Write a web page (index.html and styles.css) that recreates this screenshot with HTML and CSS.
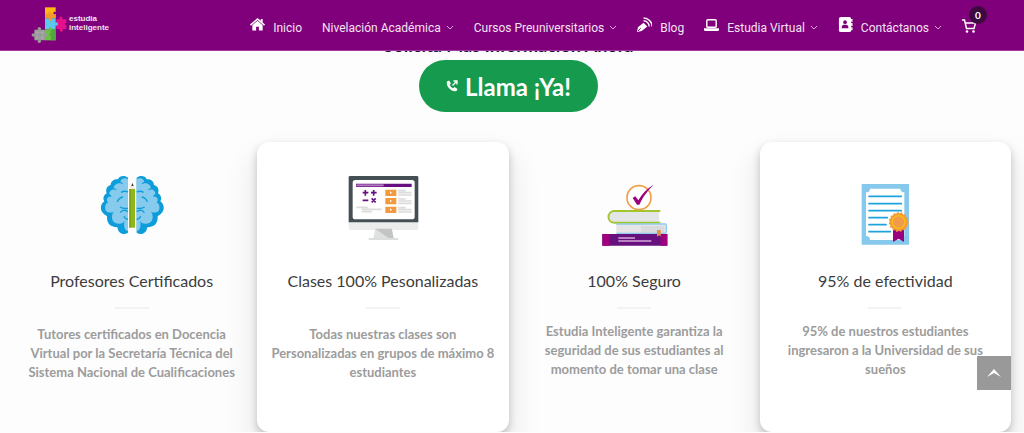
FILE: index.html
```
<!DOCTYPE html>
<html lang="es">
<head>
    <meta charset="UTF-8">
    <meta name="viewport" content="width=device-width, initial-scale=1.0">
    <title>Estudia Inteligente</title>
    <link rel="stylesheet" href="styles.css">
</head>
<body>
    <header class="header">
        <a href="#inicio" class="logo">
            <svg class="logo-mark" viewBox="0 0 108 108" aria-hidden="true">
                <path fill="#fdb813" d="M42 1h32v33H42z"/>
                <path fill="#f39a2b" d="M42 20h10v-4h8v5h14v13H42z"/>
                <circle cx="71" cy="18" r="4" fill="#80007b"/>
                <path fill="#5bc8f0" d="M42 34h32v33H42z"/>
                <circle cx="58" cy="37" r="5" fill="#f39a2b"/>
                <path fill="#e5118a" d="M76 37h10a5 5 0 1 1 8 0h12v10a4 4 0 1 0 0 8v11H95a5 5 0 1 1-8 0H76z"/>
                <circle cx="76" cy="51" r="5" fill="#5bc8f0"/>
                <path fill="#6fbe44" d="M42 67h32v33H42z"/>
                <path fill="#4fa83d" d="M58 67h16v33H60V86h-4v-8h4z"/>
                <circle cx="58" cy="66" r="5" fill="#6fbe44"/>
                <path fill="#9a9a9a" d="M10 68h11a5 5 0 1 1 8 0h13v32H29a5 5 0 1 1-8 0H10V88a5 5 0 1 1 0-8z"/>
                <circle cx="43" cy="84" r="5" fill="#9a9a9a"/>
                <path stroke="#c4c4c4" stroke-width="1" d="M12 76h28M12 92h28M18 69v30M34 69v30"/>
            </svg>
            <span class="logo-text">estudia<br>inteligente</span>
        </a>

        <nav class="nav-links">
            <a href="#inicio" class="nav-link">
                <svg class="nav-icon" viewBox="0 0 16 16" fill="#fff" aria-hidden="true">
                    <path d="M8 1 0 8l1 1.200 7-6 7 6L16 8l-2.500-2.200V2h-2v2z"/>
                    <path d="M8 4 2.500 8.700V14.500h4v-4h3v4h4V8.700z"/>
                </svg>
                Inicio
            </a>
            <a href="#nivelacion" class="nav-link">
                Nivelación Académica
                <svg class="caret" viewBox="0 0 8 8" aria-hidden="true"><path d="M1 2l3 3 3-3"/></svg>
            </a>
            <a href="#cursos" class="nav-link">
                Cursos Preuniversitarios
                <svg class="caret" viewBox="0 0 8 8" aria-hidden="true"><path d="M1 2l3 3 3-3"/></svg>
            </a>
            <a href="#blog" class="nav-link">
                <svg class="nav-icon" viewBox="0 0 16 16" aria-hidden="true">
                    <path fill="#fff" d="M0 16l1-5L7 6l4 4-6 5z"/>
                    <path stroke="#80007b" d="M1 15l3-3"/>
                    <path fill="none" stroke="#fff" stroke-width="1.5" d="M7 4a6 6 0 0 1 6 6M7 1a9 9 0 0 1 9 9"/>
                </svg>
                Blog
            </a>
            <a href="#virtual" class="nav-link">
                <svg class="nav-icon" viewBox="0 0 16 16" aria-hidden="true">
                    <rect x="3" y="3" width="10" height="8" rx="1" fill="none" stroke="#fff" stroke-width="1.5"/>
                    <path fill="#fff" d="M0 12h16v2l-1 1H1l-1-1z"/>
                </svg>
                Estudia Virtual
                <svg class="caret" viewBox="0 0 8 8" aria-hidden="true"><path d="M1 2l3 3 3-3"/></svg>
            </a>
            <a href="#contacto" class="nav-link">
                <svg class="nav-icon" viewBox="0 0 16 16" aria-hidden="true">
                    <rect x="1" y="0" width="13" height="16" rx="2" fill="#fff"/>
                    <path fill="#fff" d="M14 2h1.500v3H14zM14 6.500h1.500v3H14zM14 11h1.500v3H14z"/>
                    <circle cx="7.500" cy="5.500" r="2" fill="#80007b"/>
                    <path fill="#80007b" d="M4 12V10.500a2.500 2.500 0 0 1 2-2.300h3a2.500 2.500 0 0 1 2 2.300V12z"/>
                </svg>
                Contáctanos
                <svg class="caret" viewBox="0 0 8 8" aria-hidden="true"><path d="M1 2l3 3 3-3"/></svg>
            </a>
            <a href="#carrito" class="cart" aria-label="Carrito">
                <svg class="cart-icon" viewBox="0 0 14 14" aria-hidden="true">
                    <path fill="none" stroke="#fff" stroke-width="1.5" d="M0 1h2.500l2 8.500h7.500L13.500 4H3.500"/>
                    <circle cx="5" cy="12.500" r="1.300" fill="#fff"/>
                    <circle cx="11.500" cy="12.500" r="1.300" fill="#fff"/>
                </svg>
                <span class="cart-count">0</span>
            </a>
        </nav>
    </header>

    <main class="main" id="inicio">
        <h2 class="cta-title">Solicita Más Información Ahora</h2>
        <a href="#llamar" class="cta-button">
            <svg class="phone" viewBox="0 0 12 12" aria-hidden="true">
                <path fill="#fff" d="M1 1.500 3 .5l2 3-1.300 1.300C4.200 6.300 5.700 7.800 7.200 8.300L8.500 7l3 2-1 2C5.500 12.500-.5 6.500 1 1.500z"/>
                <path fill="none" stroke="#fff" stroke-width="1.300" d="M6.500 5.500l4-4M7.500 1h3.500v3.500"/>
            </svg>
            Llama ¡Ya!
        </a>

        <section class="cards">
            <article class="card card-low">
                <svg class="card-icon" viewBox="-12 0 330 270" aria-hidden="true">
                    <g id="half">
                        <path fill="#0d9ddb" d="M141 53c-10-8-26-6-30 5-12-2-22 6-22 17-12 3-16 14-12 25-10 6-12 17-7 24-13 9-14 28-2 37 5 4 9 6 10 8-1 20 8 32 31 33 3 20 19 25 32 16z"/>
                        <path fill="#86cbee" d="M141 58c-8-6-20-4-23 7 5 2 8 5 9 9-7-8-27-6-29 11 5 0 8 2 10 6-12-6-24 0-23 12 4 1 6 4 7 7-13-2-18 10-11 18-8 0-13 20-3 27 7 3 14 4 20 1-9 10-8 37 17 35 8 0 13-4 16-9-4 15 0 30 10 31z"/>
                        <path fill="none" stroke="#0d9ddb" stroke-width="4" d="M109 126c1-7 9-14 17-15M120 97c7-4 15-4 21-1M117 141c9 6 17 5 24 4M118 158c4-9 14-9 23-3M129 169c3 7 8 9 12 9"/>
                    </g>
                    <use href="#half" transform="translate(308 0) scale(-1 1)"/>
                    <path fill="#8fb71b" d="M145 87h17v116h-17z"/>
                    <path fill="#729f12" d="M145 87h4v116h-4z"/>
                    <path fill="#f4ead9" d="M145 87l9-19 8 19z"/>
                    <path fill="#333" d="M151 78l3-9 4 9z"/>
                </svg>
                <h3 class="card-title">Profesores Certificados</h3>
                <p class="card-text">Tutores certificados en Docencia Virtual por la Secretaría Técnica del Sistema Nacional de Cualificaciones</p>
            </article>

            <article class="card card-low card-raised">
                <svg class="card-icon" viewBox="-8 0 330 270" aria-hidden="true">
                    <rect x="54" y="48" width="209" height="142" rx="4" fill="#444f54"/>
                    <rect x="66" y="60" width="186" height="118" rx="8" fill="#fff"/>
                    <path fill="#ececec" d="M54 187h209v18a5 5 0 0 1-5 5H59a5 5 0 0 1-5-5z"/>
                    <path fill="#dfe0e0" d="M134 206h49l6 29h-61z"/>
                    <path fill="#c3c4c4" d="M134 206h49l6 29h-15z"/>
                    <path fill="#dcdddd" d="M114 234h89v6h-89z"/>
                    <path fill="#66117f" d="M76 71h167v10H76z"/>
                    <path fill="#b27abe" d="M77 73h82v6H77z"/>
                    <path stroke="#66117f" stroke-width="5" d="M96 98h17M104 90v17M121 98h17M129 90v17M96 121h17M123 115l12 12M135 115l-12 12"/>
                    <path fill="#f3993e" d="M164 89h33v19h-33zM164 114h33v19h-33zM164 140h33v19h-33z"/>
                    <path fill="#fff" d="M178 94l6 4-6 4zM178 119l6 4-6 4zM178 145l6 4-6 4z"/>
                    <path stroke="#dcdcdc" stroke-width="5" d="M203 92h22M203 98h40M203 105h40M203 117h22M203 123h40M203 130h40M203 143h22M203 149h40M203 156h40M77 142h34M93 148h60M93 155h31"/>
                </svg>
                <h3 class="card-title">Clases 100% Pesonalizadas</h3>
                <p class="card-text">Todas nuestras clases son Personalizadas en grupos de máximo 8 estudiantes</p>
            </article>

            <article class="card">
                <svg class="card-icon" viewBox="-6 -30 330 270" aria-hidden="true">
                    <circle cx="174" cy="83" r="36" fill="#fff" stroke="#f3a04b" stroke-width="5"/>
                    <path fill="#9b007d" d="M155 84l8-5 9 12c12-21 27-36 46-47-17 17-31 34-43 60h-7z"/>
                    <path fill="#e4e5e6" d="M97 125h137v32H97c-15-4-15-28 0-32z"/>
                    <path fill="none" stroke="#a4c62d" stroke-width="6" d="M238 123H99c-22 2-22 34 0 35h139"/>
                    <path fill="#e5e5e8" d="M106 163h148v29H106z"/>
                    <path fill="#d8dadd" d="M180 168h70v22h-70z"/>
                    <path fill="none" stroke="#8ccbea" stroke-width="4" d="M106 162h147q3 0 3 5v18q0 4-3 5H106"/>
                    <path fill="#67117e" d="M64 192h195v35H64z"/>
                    <path fill="#a0007d" d="M64 192h22v35H64zM239 192h20v35h-20z"/>
                    <path stroke="#d3a6d9" stroke-width="5" d="M112 204h50M112 213h99"/>
                    <path fill="#ed9140" d="M228 180h11v20l-5-4-6 4z"/>
                </svg>
                <h3 class="card-title">100% Seguro</h3>
                <p class="card-text">Estudia Inteligente garantiza la seguridad de sus estudiantes al momento de tomar una clase</p>
            </article>

            <article class="card card-raised">
                <svg class="card-icon" viewBox="0 -30 330 270" aria-hidden="true">
                    <path fill="#86c9ec" d="M95 42h142v182H95z"/>
                    <path fill="#fff" d="M120 56h91q0 11 12 11v131q-12 0-12 12h-91q0-12-12-12V67q12 0 12-11z"/>
                    <path stroke="#1fa3dd" stroke-width="5" stroke-linecap="round" d="M117 79h97M117 101h97M117 122h97M117 143h55M117 164h51M117 185h64"/>
                    <path fill="#9b007d" d="M189 176h33v40l-16-10-17 10z"/>
                    <circle cx="206" cy="156" r="27" fill="#f19b39"/>
                    <circle cx="206" cy="156" r="27" fill="none" stroke="#f19b39" stroke-width="5" stroke-dasharray="6 5"/>
                    <circle cx="206" cy="156" r="19" fill="#f19a4b" stroke="#fdbf12" stroke-width="4"/>
                </svg>
                <h3 class="card-title">95% de efectividad</h3>
                <p class="card-text">95% de nuestros estudiantes ingresaron a la Universidad de sus sueños</p>
            </article>
        </section>
    </main>

    <button class="to-top" type="button" aria-label="Volver arriba">
        <svg class="to-top-icon" viewBox="0 0 14 8" aria-hidden="true"><path fill="#fff" d="M7 0l7 8-7-4-7 4z"/></svg>
    </button>

    <script>
        document.querySelector('.to-top').addEventListener('click', () => {
            window.scrollTo({ top: 0, behavior: 'smooth' });
        });
    </script>
</body>
</html>
```
FILE: styles.css
```
:root {
    --purple: #80007b;
    --green: #169b4e;
    --title: #3c3c3c;
    --text: #9c9c9c;
}

* {
    margin: 0;
    padding: 0;
    box-sizing: border-box;
    font-family: Lato, 'Open Sans', sans-serif;
}

body {
    background: #fdfdfd;
}

a {
    color: inherit;
    text-decoration: none;
}

.header {
    position: fixed;
    top: 0;
    width: 100%;
    height: 51px;
    padding: 0 48px 0 31px;
    display: flex;
    justify-content: space-between;
    align-items: center;
    background: var(--purple);
    border-bottom: 1px solid #a03a9c;
    color: #f3e3f2;
    z-index: 10;
}

.logo {
    display: flex;
    align-items: center;
    gap: 2px;
}

.logo-mark {
    width: 36px;
    height: 36px;
}

.logo-text {
    font-family: 'Liberation Sans', sans-serif;
    font-size: 8px;
    line-height: 9px;
    font-weight: 700;
    padding-bottom: 4px;
}

.nav-links {
    display: flex;
    align-items: center;
    gap: 20px;
    padding-top: 6px;
}

.nav-link {
    display: flex;
    align-items: center;
    font-family: Roboto, sans-serif;
    font-size: 12px;
    line-height: 18px;
    white-space: nowrap;
}

.nav-icon {
    width: 15px;
    height: 15px;
    margin: 0 8px 7px 0;
}

.caret {
    width: 8px;
    height: 8px;
    margin-left: 5px;
    fill: none;
    stroke: #d9a8d7;
}

.cart {
    position: relative;
    display: flex;
    margin-bottom: 4px;
}

.cart-icon {
    width: 14px;
    height: 14px;
    overflow: visible;
}

.cart-count {
    position: absolute;
    top: -13px;
    left: 7px;
    width: 18px;
    height: 18px;
    border-radius: 50%;
    background: #3d0a40;
    color: #fff;
    font-size: 10px;
    line-height: 18px;
    font-weight: 700;
    text-align: center;
}

.main {
    display: flex;
    flex-direction: column;
    align-items: center;
    padding: 32px 13px 0 6px;
}

.cta-title {
    color: #20123a;
    font-size: 18px;
    line-height: 26px;
    margin-bottom: 2px;
}

.cta-button {
    display: flex;
    align-items: center;
    gap: 7px;
    height: 52px;
    padding: 0 27px;
    border-radius: 26px;
    background: var(--green);
    color: #fff;
    font-size: 24px;
    font-weight: 700;
}

.phone {
    width: 12px;
    height: 12px;
}

.cards {
    display: grid;
    grid-template-columns: repeat(4, 1fr);
    width: 100%;
    margin-top: 30px;
}

.card {
    padding: 18px 11px 50px;
    border-radius: 12px;
    text-align: center;
}

.card-raised {
    background: #fff;
    box-shadow: 0 4px 8px rgba(0, 0, 0, 0.22), 0 20px 24px 12px rgba(0, 0, 0, 0.05);
}

.card-icon {
    display: block;
    width: 110px;
    height: 90px;
    margin: 0 auto 19px;
}

.card-title {
    color: var(--title);
    font-size: 16px;
    line-height: 24px;
    font-weight: 400;
}

.card-title::after {
    content: '';
    display: block;
    width: 34px;
    height: 2px;
    margin: 14px auto 13px;
    background: #f3f3f3;
}

.card-text {
    color: var(--text);
    font-size: 13px;
    line-height: 19px;
    font-weight: 700;
}

.card-low .card-text {
    padding-top: 3px;
}

.to-top {
    position: fixed;
    right: 13px;
    bottom: 43px;
    width: 34px;
    height: 34px;
    display: flex;
    align-items: center;
    justify-content: center;
    border: none;
    background: #999;
    cursor: pointer;
}

.to-top-icon {
    width: 14px;
    height: 8px;
}
```
